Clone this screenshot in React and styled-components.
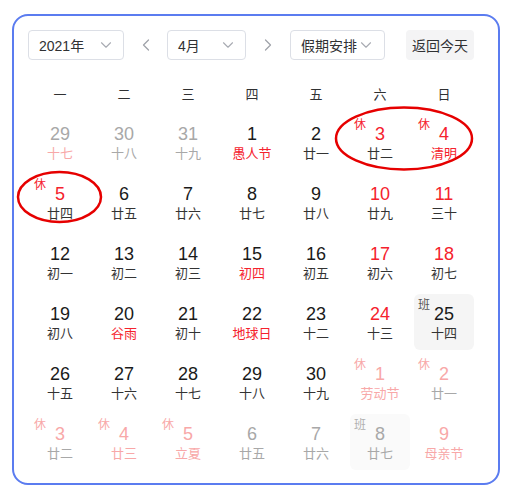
import React from 'react'
import styled, { createGlobalStyle } from 'styled-components'
import { ChevronDown, ChevronLeft, ChevronRight } from 'lucide-react'

const GlobalStyle = createGlobalStyle`
    body {
        margin: 0;
        background: #fff;
        font-family: 'Liberation Sans', 'Noto Sans CJK SC', sans-serif;
    }
`

const Frame = styled.div`
    position: relative;
    box-sizing: border-box;
    margin: 14px 0 0 12px;
    width: 488px;
    height: 471px;
    border: 2px solid #5b7cf0;
    border-radius: 16px;
    padding: 14px 0 0 14px;
`

const Toolbar = styled.div`
    display: flex;
    align-items: center;
    height: 30px;
`

const Select = styled.div`
    box-sizing: border-box;
    width: ${p => p.w}px;
    height: 30px;
    border: 1px solid #dcdfe6;
    border-radius: 4px;
    display: flex;
    align-items: center;
    justify-content: space-between;
    padding: 0 ${p => p.pr || 8}px 0 10px;
    font-size: 14px;
    white-space: nowrap;
    color: #303133;
`

const Arrow = styled.div`
    width: ${p => p.w}px;
    display: flex;
    justify-content: center;
    color: #a0a3aa;
`

const TodayButton = styled.div`
    margin-left: 21px;
    width: 68px;
    height: 30px;
    border-radius: 4px;
    background: #f4f4f5;
    display: flex;
    align-items: center;
    justify-content: center;
    font-size: 14px;
    white-space: nowrap;
    color: #303133;
`

const WeekRow = styled.div`
    display: grid;
    grid-template-columns: repeat(7, 60px);
    column-gap: 4px;
    margin: 18px 0 0 2px;
    height: 30px;
    align-items: center;
`

const WeekDay = styled.div`
    text-align: center;
    font-size: 13px;
    color: #303133;
`

const Grid = styled.div`
    display: grid;
    grid-template-columns: repeat(7, 60px);
    grid-auto-rows: 56px;
    gap: 4px;
    margin: 6px 0 0 2px;
`

const Cell = styled.div`
    position: relative;
    border-radius: 6px;
    background: ${p => (p.work ? (p.other ? '#fafafa' : '#f5f5f5') : 'transparent')};
    display: flex;
    flex-direction: column;
    align-items: center;
    padding-top: 9px;
    box-sizing: border-box;
`

const Num = styled.div`
    font-size: 18px;
    line-height: 22px;
    color: ${p => p.color};
`

const Lunar = styled.div`
    font-size: 13px;
    line-height: 18px;
    margin-top: 0;
    color: ${p => p.color};
`

const Tag = styled.div`
    position: absolute;
    left: 4px;
    top: 1px;
    font-size: 12px;
    color: ${p => p.color};
`

const Marks = styled.svg`
    position: absolute;
    left: 0;
    top: 0;
    width: 100%;
    height: 100%;
    overflow: visible;
    pointer-events: none;
`

const RED = '#f5222d'
const PINK = '#f8a8a8'
const GRAY = '#a8a8a8'
const DARK = '#1a1a1a'
const LUNAR = '#333'

// d, lunar, other month, weekend/holiday number, lunar is festival, tag
const days = [
    [29, '十七', 1, 0, 1], [30, '十八', 1], [31, '十九', 1], [1, '愚人节', 0, 0, 1],
    [2, '廿一'], [3, '廿二', 0, 1, 0, '休'], [4, '清明', 0, 1, 1, '休'],
    [5, '廿四', 0, 1, 0, '休'], [6, '廿五'], [7, '廿六'], [8, '廿七'], [9, '廿八'],
    [10, '廿九', 0, 1], [11, '三十', 0, 1],
    [12, '初一'], [13, '初二'], [14, '初三'], [15, '初四', 0, 0, 1], [16, '初五'],
    [17, '初六', 0, 1], [18, '初七', 0, 1],
    [19, '初八'], [20, '谷雨', 0, 0, 1], [21, '初十'], [22, '地球日', 0, 0, 1], [23, '十二'],
    [24, '十三', 0, 1], [25, '十四', 0, 0, 0, '班'],
    [26, '十五'], [27, '十六'], [28, '十七'], [29, '十八'], [30, '十九'],
    [1, '劳动节', 1, 1, 1, '休'], [2, '廿一', 1, 1, 0, '休'],
    [3, '廿二', 1, 1, 0, '休'], [4, '廿三', 1, 1, 1, '休'], [5, '立夏', 1, 1, 1, '休'],
    [6, '廿五', 1], [7, '廿六', 1], [8, '廿七', 1, 0, 0, '班'], [9, '母亲节', 1, 1, 1],
]

function DayCell({ day }) {
    const [d, lunar, other, red, fest, tag] = day
    const numColor = other ? (red ? PINK : GRAY) : red ? RED : DARK
    const lunarColor = other ? (fest ? PINK : GRAY) : fest ? RED : LUNAR
    let tagColor = RED
    if (tag === '班') tagColor = other ? '#b0b0b0' : '#555'
    else if (other) tagColor = PINK
    return (
        <Cell work={tag === '班'} other={other}>
            {tag && <Tag color={tagColor}>{tag}</Tag>}
            <Num color={numColor}>{d}</Num>
            <Lunar color={lunarColor}>{lunar}</Lunar>
        </Cell>
    )
}

export default function App() {
    return (
        <>
            <GlobalStyle />
            <Frame>
                <Toolbar>
                    <Select w={96}>
                        <span>2021年</span>
                        <ChevronDown size={18} color="#a8abb2" strokeWidth={1.5} />
                    </Select>
                    <Arrow w={43}>
                        <ChevronLeft size={20} strokeWidth={1.5} />
                    </Arrow>
                    <Select w={79}>
                        <span>4月</span>
                        <ChevronDown size={18} color="#a8abb2" strokeWidth={1.5} />
                    </Select>
                    <Arrow w={44}>
                        <ChevronRight size={20} strokeWidth={1.5} />
                    </Arrow>
                    <Select w={95} pr={9}>
                        <span>假期安排</span>
                        <ChevronDown size={18} color="#a8abb2" strokeWidth={1.5} />
                    </Select>
                    <TodayButton>返回今天</TodayButton>
                </Toolbar>
                <WeekRow>
                    {['一', '二', '三', '四', '五', '六', '日'].map(w => (
                        <WeekDay key={w}>{w}</WeekDay>
                    ))}
                </WeekRow>
                <Grid>
                    {days.map((day, i) => (
                        <DayCell key={i} day={day} />
                    ))}
                </Grid>
                <Marks>
                    <ellipse cx="390" cy="122.5" rx="68" ry="31" fill="none" stroke="#e60000" strokeWidth="2.5" />
                    <ellipse cx="45.5" cy="181" rx="41.5" ry="25" fill="none" stroke="#e60000" strokeWidth="2.5" />
                </Marks>
            </Frame>
        </>
    )
}
